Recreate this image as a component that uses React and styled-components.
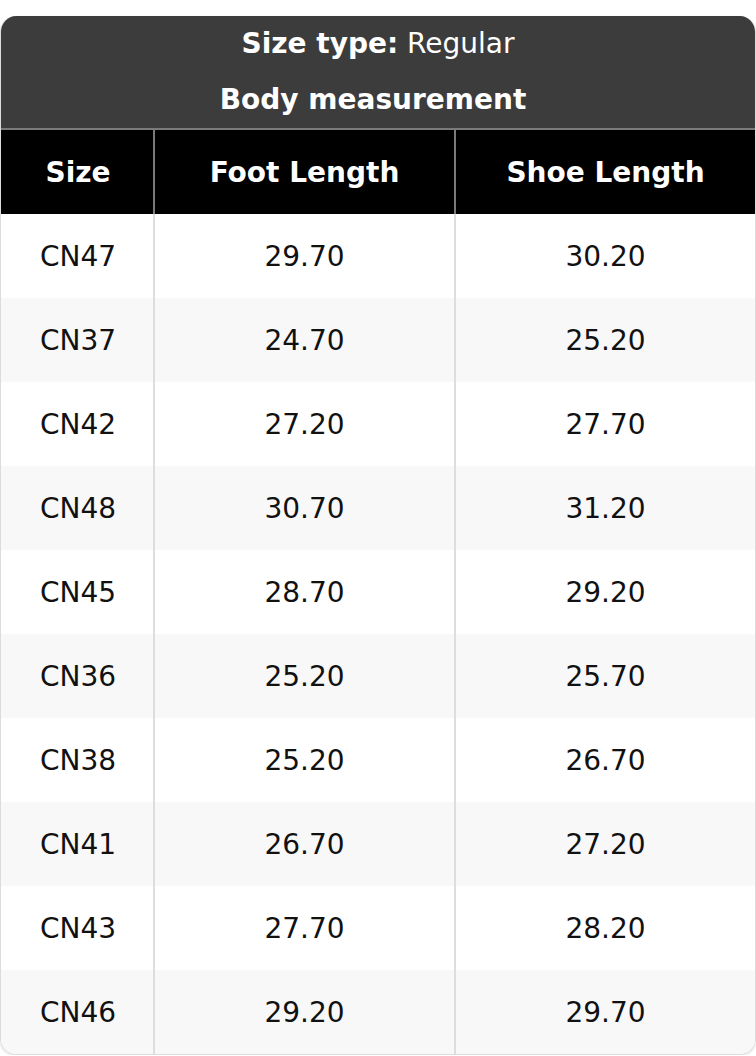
import React from "react";
import styled, { createGlobalStyle } from "styled-components";

const Global = createGlobalStyle`
    html, body {
        margin: 0;
        padding: 0;
        background: #ffffff;
        font-family: "DejaVu Sans", "Liberation Sans", sans-serif;
    }
`;

const Page = styled.div`
    padding-top: 16px;
`;

const Card = styled.div`
    width: 756px;
    border-radius: 16px;
    overflow: hidden;
    border: 1px solid #dcdcdc;
    border-top: none;
    box-sizing: border-box;
    box-shadow: 0 1px 3px rgba(0, 0, 0, 0.12);
`;

const Caption = styled.div`
    background: #3c3c3c;
    color: #ffffff;
    text-align: center;
    font-size: 28px;
    line-height: 56px;
    border-bottom: 2px solid #7a7a7a;
`;

const Strong = styled.span`
    font-weight: bold;
`;

const SubTitle = styled.div`
    font-weight: bold;
    padding-right: 10px;
`;

const Table = styled.table`
    width: 100%;
    border-collapse: collapse;
    table-layout: fixed;
    font-size: 28px;
`;

const Col = styled.col`
    width: ${p => p.$w};
`;

const HeadCell = styled.th`
    background: #000000;
    color: #ffffff;
    font-weight: bold;
    height: 84px;
    padding: 0;
    text-align: center;
    border-right: 2px solid #7a7a7a;

    &:first-child {
        padding-left: 2px;
    }

    &:last-child {
        border-right: none;
    }
`;

const Row = styled.tr`
    background: ${p => (p.$alt ? "#f8f8f8" : "#ffffff")};
`;

const Cell = styled.td`
    height: 84px;
    padding: 0;
    text-align: center;
    color: #111111;
    border-right: 2px solid #dddddd;

    &:first-child {
        padding-left: 2px;
    }

    &:last-child {
        border-right: none;
    }
`;

const rows = [
    ["CN47", "29.70", "30.20"],
    ["CN37", "24.70", "25.20"],
    ["CN42", "27.20", "27.70"],
    ["CN48", "30.70", "31.20"],
    ["CN45", "28.70", "29.20"],
    ["CN36", "25.20", "25.70"],
    ["CN38", "25.20", "26.70"],
    ["CN41", "26.70", "27.20"],
    ["CN43", "27.70", "28.20"],
    ["CN46", "29.20", "29.70"],
];

const App = () => {
    return (
        <Page>
            <Global />
            <Card>
                <Caption>
                    <div>
                        <Strong>Size type:</Strong> Regular
                    </div>
                    <SubTitle>Body measurement</SubTitle>
                </Caption>
                <Table>
                    <colgroup>
                        <Col $w="153px" />
                        <Col $w="301px" />
                        <Col $w="auto" />
                    </colgroup>
                    <thead>
                        <tr>
                            <HeadCell>Size</HeadCell>
                            <HeadCell>Foot Length</HeadCell>
                            <HeadCell>Shoe Length</HeadCell>
                        </tr>
                    </thead>
                    <tbody>
                        {rows.map((r, i) => (
                            <Row key={r[0]} $alt={i % 2 === 1}>
                                {r.map((v, j) => (
                                    <Cell key={j}>{v}</Cell>
                                ))}
                            </Row>
                        ))}
                    </tbody>
                </Table>
            </Card>
        </Page>
    );
};

export default App;
